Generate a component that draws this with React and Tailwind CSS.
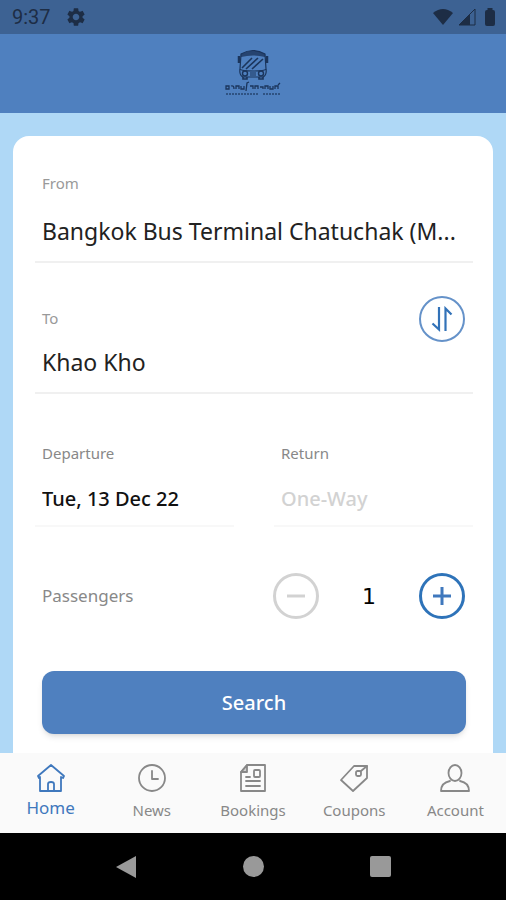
import { useState } from "react";
import { MdSettings } from "react-icons/md";

const TABS = [
  { id: "home", label: "Home", Icon: HomeIcon },
  { id: "news", label: "News", Icon: ClockIcon },
  { id: "bookings", label: "Bookings", Icon: BookingIcon },
  { id: "coupons", label: "Coupons", Icon: CouponIcon },
  { id: "account", label: "Account", Icon: AccountIcon },
];

function NavIcon({ children }) {
  return (
    <svg width="30" height="30" viewBox="0 0 30 30" fill="none" stroke="currentColor" strokeWidth="1.8" strokeLinejoin="round" strokeLinecap="round" aria-hidden="true">
      {children}
    </svg>
  );
}

function HomeIcon() {
  return (
    <NavIcon>
      <path d="M2 13 15 2l13 11-1 2-2-1v14H4V14l-1 1z" />
      <path d="M12 28v-7q0-2 3-2t3 2v7" />
    </NavIcon>
  );
}

function ClockIcon() {
  return (
    <NavIcon>
      <circle cx="15" cy="15" r="13" />
      <path d="M15 8v8h6" />
    </NavIcon>
  );
}

function BookingIcon() {
  return (
    <NavIcon>
      <path d="M9 2h18v26H3V9z" />
      <path d="M9 2v7H3z" fill="currentColor" fillOpacity=".35" />
      <rect x="16" y="7" width="6" height="7" rx="1" />
      <path d="M8 14h4M8 18h14M8 23h14" />
    </NavIcon>
  );
}

function CouponIcon() {
  return (
    <NavIcon>
      <path d="M15 3h13v12L14 28 2 17z" />
      <rect x="17" y="8" width="5" height="5" rx="1.5" />
      <path d="m22 8 6-5" />
    </NavIcon>
  );
}

function AccountIcon() {
  return (
    <NavIcon>
      <ellipse cx="15" cy="10" rx="6.5" ry="8" />
      <path d="M10 18c-5 1-9 4-9 10h28c0-6-4-9-9-10" />
    </NavIcon>
  );
}

function StatusBar() {
  return (
    <div className="flex h-[34px] shrink-0 items-center bg-[#3d6293] pl-3 pr-[10px] text-[#1d2d45]">
      <span className="font-[Roboto,sans-serif] text-xl leading-none">9:37</span>
      <MdSettings className="ml-[14px]" size={22} aria-hidden="true" />
      <div className="ml-auto flex items-center">
        <svg width="22" height="18" viewBox="0 0 22 18" fill="currentColor" aria-hidden="true">
          <path d="M1 5Q11-3 21 5L11 17z" />
        </svg>
        <svg className="ml-1" width="18" height="18" viewBox="0 0 18 18" aria-hidden="true">
          <path d="M1 17 17 1v16z" fill="none" stroke="currentColor" strokeWidth="1" />
          <path d="M1 17 12 6v11z" fill="currentColor" />
        </svg>
        <svg className="ml-2" width="12" height="18" viewBox="0 0 12 18" fill="currentColor" aria-hidden="true">
          <path d="M3.500 0h5v2H9q2 0 2 2v12q0 2-2 2H3q-2 0-2-2V4q0-2 2-2h.5z" />
        </svg>
      </div>
    </div>
  );
}

function BusLogo() {
  return (
    <svg width="58" height="50" viewBox="0 0 58 50" fill="none" stroke="#1b355c" role="img" aria-label="Bus">
      <path d="M17 5q12-7 24 0l1 15q-1 2-13 2t-13-2z" strokeWidth="1.2" />
      <path d="M17 5q12-7 24 0v3q-12-3-24 0z" fill="#1b355c" fillOpacity=".8" stroke="none" />
      <path d="M15 7v7M43 7v7" strokeWidth="2.5" />
      <path d="m18 19 10-10M22 20 34 9M28 20 39 10" strokeWidth="1.6" />
      <path d="M16 20q-1 6 3 8h20q4-2 3-8" strokeWidth="1.2" />
      <circle cx="21" cy="24.500" r="2.500" strokeWidth="1.400" />
      <circle cx="37" cy="24.500" r="2.500" strokeWidth="1.400" />
      <path d="M26 24h6M26 26h6" strokeWidth="1" />
      <path d="M19 28v2h4v-2M35 28v2h4v-2" strokeWidth="1.600" />
      {/* Wordmark strokes under the bus */}
      <path d="M2 40v-3h3v3zM7 37q3-1 3 3M12 40v-3h3v3M17 37v3h3v-3M22 42l1-8 2-1M26 37h3v3M31 40v-3h3v3M36 38h3v2M41 40v-3h3v3M46 37v3h3v-3M51 40v-3h3v3M54 36l2-2" strokeWidth="1.300" />
      <path d="M2 45h33M39 45h17" strokeWidth="2" strokeDasharray="2 1" opacity=".6" />
    </svg>
  );
}

function Field({ id, label, value, gap }) {
  return (
    <div className="border-b-2 border-[#f0f0f0] pb-[14px]">
      <label htmlFor={id} className="block px-[7px] text-[15px] leading-6 text-[#999]">
        {label}
      </label>
      <input id={id} readOnly value={value} className={`w-full truncate px-[7px] text-[23px] leading-8 text-[#222] outline-none ${gap}`} />
    </div>
  );
}

function DateField({ id, label, value, placeholder }) {
  return (
    <div className="min-w-0 border-b-2 border-[#f8f8f8] pb-3">
      <label htmlFor={id} className="block px-[7px] text-[15px] leading-6 text-[#888]">
        {label}
      </label>
      <input
        id={id}
        readOnly
        value={value}
        placeholder={placeholder}
        className="mt-5 w-full px-[7px] text-xl leading-7 font-medium text-[#111] outline-none placeholder:text-[#d2d2d2]"
      />
    </div>
  );
}

function SearchCard() {
  const [passengers, setPassengers] = useState(1);

  return (
    <form className="flex-1 rounded-t-2xl bg-white pl-[22px] pr-5 pt-[35px] pb-4" onSubmit={(e) => e.preventDefault()}>
      <Field id="from" label="From" value="Bangkok Bus Terminal Chatuchak (M..." gap="mt-5" />

      <div className="relative mt-[43px]">
        <Field id="to" label="To" value="Khao Kho" gap="mt-4" />
        {/* Swap sits over the end of the destination row */}
        <button type="button" aria-label="Swap" className="absolute -top-2.5 right-2 flex size-[46px] items-center justify-center rounded-full border-2 border-[#6592c9] text-[#3272b8]">
          <svg width="22" height="26" viewBox="0 0 22 26" fill="none" stroke="currentColor" strokeWidth="2.2" aria-hidden="true">
            <path d="M8 1v22.500l-6.500-6M14.500 25V2.500l6 6" />
          </svg>
        </button>
      </div>

      <div className="mt-[47px] grid grid-cols-2 gap-10">
        <DateField id="departure" label="Departure" value="Tue, 13 Dec 22" />
        <DateField id="return" label="Return" value="" placeholder="One-Way" />
      </div>

      <div className="mt-[46px] flex items-center justify-between pl-[7px] pr-2">
        <span className="text-[17px] text-[#888]">Passengers</span>
        <div className="flex w-48 items-center justify-between">
          <button
            type="button"
            aria-label="Remove passenger"
            disabled={passengers === 1}
            onClick={() => setPassengers(passengers - 1)}
            className="flex size-[46px] items-center justify-center rounded-full border-3 border-[#3272b8] text-[#3272b8] disabled:border-[#d2d2d2] disabled:text-[#d2d2d2]"
          >
            <svg width="20" height="20" viewBox="0 0 20 20" stroke="currentColor" strokeWidth="3" aria-hidden="true">
              <path d="M1 10h18" />
            </svg>
          </button>
          <output className="font-['DejaVu_Sans',sans-serif] text-[22px] text-black">{passengers}</output>
          <button
            type="button"
            aria-label="Add passenger"
            onClick={() => setPassengers(passengers + 1)}
            className="flex size-[46px] items-center justify-center rounded-full border-3 border-[#2e73b9] text-[#3f78bd]"
          >
            <svg width="20" height="20" viewBox="0 0 20 20" stroke="currentColor" strokeWidth="3" aria-hidden="true">
              <path d="M1 10h18M10 1v18" />
            </svg>
          </button>
        </div>
      </div>

      <div className="mt-[52px] px-[7px]">
        <button type="submit" className="h-[63px] w-full rounded-xl bg-[#4f80bf] text-xl font-medium text-white shadow-md">
          Search
        </button>
      </div>
    </form>
  );
}

function TabBar() {
  const [active, setActive] = useState("home");

  return (
    <nav className="grid h-20 shrink-0 grid-cols-5 bg-[#fafafa]">
      {TABS.map(({ id, label, Icon }) => (
        <button
          key={id}
          type="button"
          onClick={() => setActive(id)}
          className={`flex flex-col items-center pt-[10px] ${active === id ? "text-[#3f78bd]" : "text-[#888]"}`}
        >
          <Icon />
          <span className={active === id ? "text-[17px] leading-[30px]" : "mt-1 text-[15px] leading-[26px]"}>{label}</span>
        </button>
      ))}
    </nav>
  );
}

function SystemBar() {
  return (
    <div className="flex h-[67px] shrink-0 items-center justify-center gap-[106px] bg-black text-[#999]">
      <button type="button" aria-label="Back">
        <svg width="22" height="24" viewBox="0 0 22 24" fill="currentColor">
          <path d="M1 12 21 1v22z" />
        </svg>
      </button>
      <button type="button" aria-label="Home screen" className="size-[21px] rounded-full bg-[#999]" />
      <button type="button" aria-label="Recent apps" className="size-[21px] rounded-xs bg-[#999]" />
    </div>
  );
}

export default function App() {
  return (
    <div className="flex min-h-screen flex-col bg-[#afd8f6] font-['Noto_Sans','Open_Sans',sans-serif]">
      <StatusBar />
      <header className="flex h-[79px] shrink-0 items-center justify-center bg-[#4f80bf]">
        <BusLogo />
      </header>
      <main className="flex flex-1 flex-col px-[13px] pt-[23px]">
        <SearchCard />
      </main>
      <TabBar />
      <SystemBar />
    </div>
  );
}
